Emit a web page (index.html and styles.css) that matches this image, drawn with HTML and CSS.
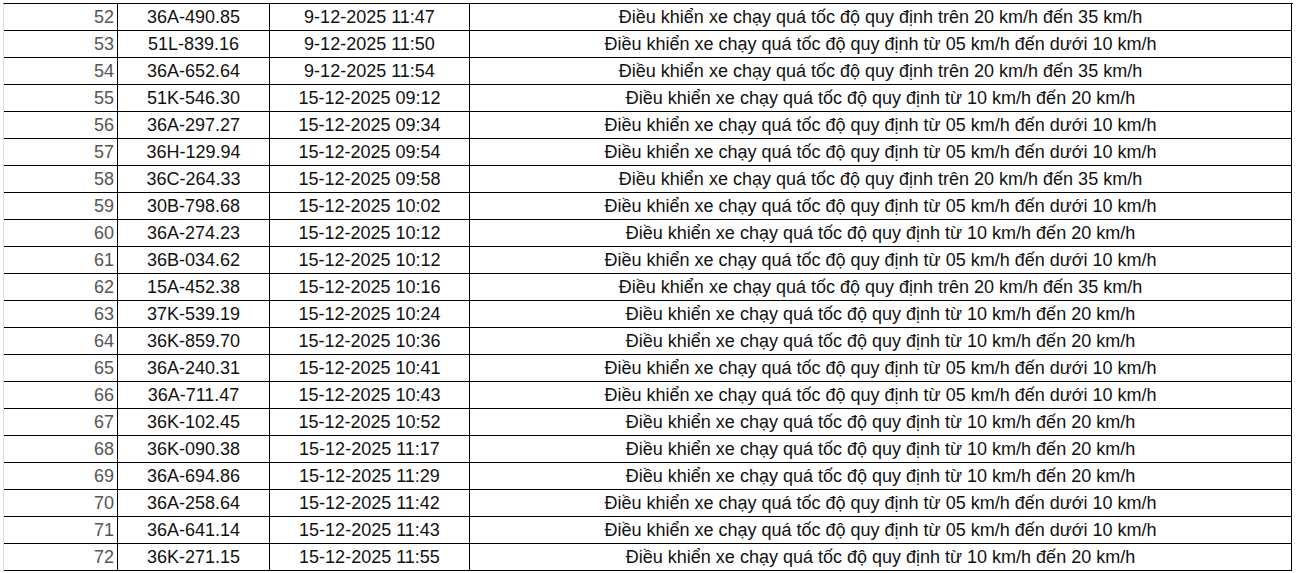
FILE: index.html
```html
<!DOCTYPE html>
<html lang="vi">
<head>
<meta charset="utf-8">
<title>Danh sách vi phạm</title>
<link rel="stylesheet" href="styles.css">
</head>
<body>
<div class="sheet">
  <div class="row"><div class="c num">52</div><div class="c">36A-490.85</div><div class="c">9-12-2025 11:47</div><div class="c">Điều khiển xe chạy quá tốc độ quy định trên 20 km/h đến 35 km/h</div></div>
  <div class="row"><div class="c num">53</div><div class="c">51L-839.16</div><div class="c">9-12-2025 11:50</div><div class="c">Điều khiển xe chạy quá tốc độ quy định từ 05 km/h đến dưới 10 km/h</div></div>
  <div class="row"><div class="c num">54</div><div class="c">36A-652.64</div><div class="c">9-12-2025 11:54</div><div class="c">Điều khiển xe chạy quá tốc độ quy định trên 20 km/h đến 35 km/h</div></div>
  <div class="row"><div class="c num">55</div><div class="c">51K-546.30</div><div class="c">15-12-2025 09:12</div><div class="c">Điều khiển xe chạy quá tốc độ quy định từ 10 km/h đến 20 km/h</div></div>
  <div class="row"><div class="c num">56</div><div class="c">36A-297.27</div><div class="c">15-12-2025 09:34</div><div class="c">Điều khiển xe chạy quá tốc độ quy định từ 05 km/h đến dưới 10 km/h</div></div>
  <div class="row"><div class="c num">57</div><div class="c">36H-129.94</div><div class="c">15-12-2025 09:54</div><div class="c">Điều khiển xe chạy quá tốc độ quy định từ 05 km/h đến dưới 10 km/h</div></div>
  <div class="row"><div class="c num">58</div><div class="c">36C-264.33</div><div class="c">15-12-2025 09:58</div><div class="c">Điều khiển xe chạy quá tốc độ quy định trên 20 km/h đến 35 km/h</div></div>
  <div class="row"><div class="c num">59</div><div class="c">30B-798.68</div><div class="c">15-12-2025 10:02</div><div class="c">Điều khiển xe chạy quá tốc độ quy định từ 05 km/h đến dưới 10 km/h</div></div>
  <div class="row"><div class="c num">60</div><div class="c">36A-274.23</div><div class="c">15-12-2025 10:12</div><div class="c">Điều khiển xe chạy quá tốc độ quy định từ 10 km/h đến 20 km/h</div></div>
  <div class="row"><div class="c num">61</div><div class="c">36B-034.62</div><div class="c">15-12-2025 10:12</div><div class="c">Điều khiển xe chạy quá tốc độ quy định từ 05 km/h đến dưới 10 km/h</div></div>
  <div class="row"><div class="c num">62</div><div class="c">15A-452.38</div><div class="c">15-12-2025 10:16</div><div class="c">Điều khiển xe chạy quá tốc độ quy định trên 20 km/h đến 35 km/h</div></div>
  <div class="row"><div class="c num">63</div><div class="c">37K-539.19</div><div class="c">15-12-2025 10:24</div><div class="c">Điều khiển xe chạy quá tốc độ quy định từ 10 km/h đến 20 km/h</div></div>
  <div class="row"><div class="c num">64</div><div class="c">36K-859.70</div><div class="c">15-12-2025 10:36</div><div class="c">Điều khiển xe chạy quá tốc độ quy định từ 10 km/h đến 20 km/h</div></div>
  <div class="row"><div class="c num">65</div><div class="c">36A-240.31</div><div class="c">15-12-2025 10:41</div><div class="c">Điều khiển xe chạy quá tốc độ quy định từ 05 km/h đến dưới 10 km/h</div></div>
  <div class="row"><div class="c num">66</div><div class="c">36A-711.47</div><div class="c">15-12-2025 10:43</div><div class="c">Điều khiển xe chạy quá tốc độ quy định từ 05 km/h đến dưới 10 km/h</div></div>
  <div class="row"><div class="c num">67</div><div class="c">36K-102.45</div><div class="c">15-12-2025 10:52</div><div class="c">Điều khiển xe chạy quá tốc độ quy định từ 10 km/h đến 20 km/h</div></div>
  <div class="row"><div class="c num">68</div><div class="c">36K-090.38</div><div class="c">15-12-2025 11:17</div><div class="c">Điều khiển xe chạy quá tốc độ quy định từ 10 km/h đến 20 km/h</div></div>
  <div class="row"><div class="c num">69</div><div class="c">36A-694.86</div><div class="c">15-12-2025 11:29</div><div class="c">Điều khiển xe chạy quá tốc độ quy định từ 10 km/h đến 20 km/h</div></div>
  <div class="row"><div class="c num">70</div><div class="c">36A-258.64</div><div class="c">15-12-2025 11:42</div><div class="c">Điều khiển xe chạy quá tốc độ quy định từ 05 km/h đến dưới 10 km/h</div></div>
  <div class="row"><div class="c num">71</div><div class="c">36A-641.14</div><div class="c">15-12-2025 11:43</div><div class="c">Điều khiển xe chạy quá tốc độ quy định từ 05 km/h đến dưới 10 km/h</div></div>
  <div class="row"><div class="c num">72</div><div class="c">36K-271.15</div><div class="c">15-12-2025 11:55</div><div class="c">Điều khiển xe chạy quá tốc độ quy định từ 10 km/h đến 20 km/h</div></div>
</div>
</body>
</html>
```

FILE: styles.css
```css
html, body {
  margin: 0;
  padding: 0;
  background: #ffffff;
}

body {
  font-family: "Liberation Sans", Arial, sans-serif;
  font-size: 18px;
  color: #111111;
}

.sheet {
  margin: 3px 0 0 3px;
  width: 1289px;
  border-top: 1px solid #000;
  border-left: 1px solid #dcdcdc;
}

.row {
  display: grid;
  grid-template-columns: 114px 152px 200px 822px;
  height: 27px;
}

.c {
  box-sizing: border-box;
  border-right: 1px solid #000;
  border-bottom: 1px solid #000;
  display: flex;
  align-items: center;
  justify-content: center;
  white-space: nowrap;
  overflow: hidden;
  line-height: 26px;
}

.c.num {
  justify-content: flex-end;
  padding-right: 3px;
  color: #555555;
}
```
